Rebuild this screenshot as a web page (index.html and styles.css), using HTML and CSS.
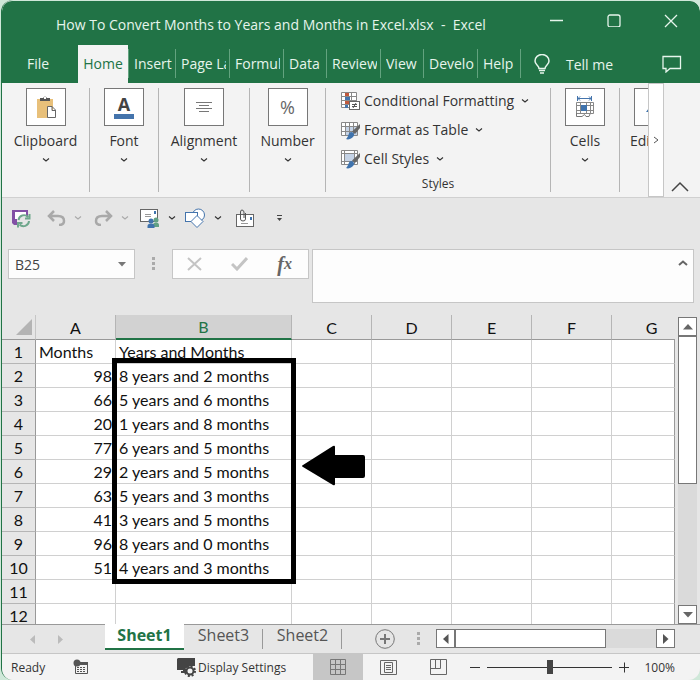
FILE: index.html
```html
<!DOCTYPE html>
<html lang="en">
<head>
  <meta charset="UTF-8" />
  <meta name="viewport" content="width=device-width, initial-scale=1.0"/>
  <title>How To Convert Months to Years and Months in Excel.xlsx - Excel</title>
  <link rel="stylesheet" href="styles.css">
</head>
<body>
  <svg width="0" height="0" class="defs" aria-hidden="true">
    <symbol id="chevron" viewBox="0 0 8 6"><path d="M1 1.500L4 4L7 1.500" fill="none" stroke="currentColor" stroke-width="1.1"/></symbol>
    <symbol id="brush" viewBox="0 0 14 16"><path d="M14 0V4L9 10L6 7.500Z" fill="#666"/><path d="M5 8C8 8 9 11 7 13C5 15 2 16 0 15C3 12 2 9 5 8Z" fill="#3f73ad"/></symbol>
  </svg>

  <div class="window">
    <header class="titlebar">
      <h1>How To Convert Months to Years and Months in Excel.xlsx &nbsp;-&nbsp; Excel</h1>
      <div class="window-buttons">
        <button aria-label="Minimize"><svg width="14" height="14"><path d="M0 7.500H13"/></svg></button>
        <button aria-label="Maximize"><svg width="14" height="14"><rect x="1" y="2" width="12" height="12" rx="2"/></svg></button>
        <button aria-label="Close"><svg width="14" height="15"><path d="M1 2L13 14M13 2L1 14"/></svg></button>
      </div>
    </header>

    <nav class="tabs">
      <a href="#" class="file">File</a>
      <a href="#" class="active">Home</a>
      <a href="#" class="w47"><span>Insert</span></a>
      <a href="#" class="w54"><span>Page Layout</span></a>
      <a href="#" class="w54"><span>Formulas</span></a>
      <a href="#" class="w43"><span>Data</span></a>
      <a href="#" class="w54"><span>Review</span></a>
      <a href="#" class="w43"><span>View</span></a>
      <a href="#" class="w54"><span>Developer</span></a>
      <a href="#" class="w43"><span>Help</span></a>
      <a href="#" class="tell">
        <svg width="16" height="21" viewBox="0 0 16 21"><path d="M5 14.500C5 11.500 1 11 1 7A7 6.500 0 0 1 15 7C15 11 11 11.500 11 14.500ZM5 16.500H11M6 19H10" fill="none" stroke="#e6f5ec" stroke-width="1.5"/></svg>
        Tell me
      </a>
      <button class="comment" aria-label="Comments"><svg width="20" height="18"><path d="M1 1.500H18.500V13.500H8L4 17V13.500H1Z" fill="none" stroke="#e6f5ec" stroke-width="1.3"/></svg></button>
    </nav>

    <section class="ribbon">
      <div class="group g-clipboard">
        <button class="big">
          <span class="tile"><svg width="24" height="24" viewBox="0 0 24 24">
            <path d="M3 4H19V23H3Z" fill="#e8c07a"/><path d="M6 6V3H9Q11 0 13 3H16V6Z" fill="#555"/><rect x="10" y="2" width="2" height="2" fill="#fff"/>
            <path d="M13.500 11.500H18L21.500 15V22.500H13.500ZM18 11.500V15.500H21.500" fill="#fff" stroke="#666"/></svg></span>
          Clipboard
          <svg class="chev"><use href="#chevron"/></svg>
        </button>
      </div>
      <div class="group g-font">
        <button class="big">
          <span class="tile letter"><b>A</b></span>
          Font
          <svg class="chev"><use href="#chevron"/></svg>
        </button>
      </div>
      <div class="group g-align">
        <button class="big">
          <span class="tile"><svg width="18" height="12"><path d="M1 1.500H17M4 4.500H14M1 7.500H17M4 10.500H14" stroke="#777"/></svg></span>
          Alignment
          <svg class="chev"><use href="#chevron"/></svg>
        </button>
      </div>
      <div class="group g-number">
        <button class="big">
          <span class="tile percent">%</span>
          Number
          <svg class="chev"><use href="#chevron"/></svg>
        </button>
      </div>
      <div class="group g-styles">
        <button class="row">
          <svg width="20" height="20"><path d="M1.500 1.500H16.500V16.500H1.500ZM1.500 5.500H16.500M1.500 9.500H16.500M1.500 13.500H16.500M5.500 1.500V16.500M11.500 1.500V16.500" fill="#fff" stroke="#888"/><path d="M5 2H9V5H5ZM5 10H9V13H5Z" fill="#c0583c"/><path d="M5 6H10V9H5ZM5 14H8V17H5Z" fill="#4474ac"/><rect x="9.500" y="10.500" width="10" height="8" fill="#fff" stroke="#666"/><path d="M12 13.500H17M12 15.500H17M16 12L13 17" stroke="#555"/></svg>
          Conditional Formatting
          <svg class="chev"><use href="#chevron"/></svg>
        </button>
        <button class="row">
          <svg width="20" height="20"><path d="M1.500 2.500H17.500V15.500H1.500Z" fill="#fff"/><path d="M6 7H17V15H6Z" fill="#c5d3e6"/><path d="M1.500 2.500H17.500V15.500H1.500ZM1.500 6.500H17.500M1.500 11.500H17.500M5.500 2.500V15.500M9.500 2.500V15.500M13.500 2.500V15.500" fill="none" stroke="#888"/><use href="#brush" x="6" y="4" width="14" height="16"/></svg>
          Format as Table
          <svg class="chev"><use href="#chevron"/></svg>
        </button>
        <button class="row">
          <svg width="20" height="20"><path d="M1.500 1.500H17.500V15.500H1.500Z" fill="#fff"/><path d="M5 5H14V12H5Z" fill="#c5d3e6"/><path d="M1.500 1.500H17.500V15.500H1.500ZM1.500 4.500H17.500M1.500 12.500H17.500M4.500 1.500V15.500M14.500 1.500V15.500" fill="none" stroke="#888"/><use href="#brush" x="6" y="4" width="14" height="16"/></svg>
          Cell Styles
          <svg class="chev"><use href="#chevron"/></svg>
        </button>
        <div class="caption">Styles</div>
      </div>
      <div class="group g-cells">
        <button class="big">
          <span class="tile"><svg width="20" height="22"><path d="M2.500 0V5M16.500 0V5M3 2.500H16M5 .5L3 2.500L5 4.500M14 .5L16 2.500L14 4.500" fill="none" stroke="#4474ac"/><path d="M1.500 6.500H18.500V17.500H1.500ZM1.500 9.500H18.500M1.500 14.500H18.500M5.500 6.500V17.500M11.500 6.500V17.500M15.500 6.500V17.500" fill="none" stroke="#888"/><rect x="6" y="9" width="6" height="6" fill="#3f73ad"/><path d="M1.500 17V20.500H7L9.500 18.500L11 20.500H14L15 18" fill="none" stroke="#777"/></svg></span>
          Cells
          <svg class="chev"><use href="#chevron"/></svg>
        </button>
      </div>
      <div class="group g-editing">
        <button class="big">
          <span class="tile"><svg width="16" height="16"><path d="M0 13L6 5V13Z" fill="#3f73ad"/></svg></span>
          Editing
        </button>
      </div>
      <button class="scroll-right" aria-label="More"><svg width="6" height="8"><path d="M1 1L5 4L1 7" fill="none" stroke="#555"/></svg></button>
      <button class="collapse" aria-label="Collapse the ribbon"><svg width="18" height="11"><path d="M1 10L9 2L17 10" fill="none" stroke="#444" stroke-width="1.5"/></svg></button>
    </section>

    <div class="quick">
      <button class="q-save" aria-label="Save"><svg width="20" height="19"><path d="M1 1H17V7H15V3H4V10H6V16H3L1 14Z" fill="#8250a5"/><path d="M4 3H15V8H8V10H4Z" fill="#fff"/><path d="M7.500 11A5.500 5.500 0 0 1 17 8M18 12A5.500 5.500 0 0 1 8.500 15.500M18.500 5V9.500H14M7 18.500V14H11.500" fill="none" stroke="#6fa78c" stroke-width="2"/></svg></button>
      <button class="q-undo faded" aria-label="Undo"><svg width="19" height="16"><path d="M2 6H11Q17 6 17 11Q17 15 12 15M7 1L2 6L7 11" fill="none" stroke="#a9a9a9" stroke-width="2.5"/></svg><svg class="chev"><use href="#chevron"/></svg></button>
      <button class="q-redo faded" aria-label="Redo"><svg width="19" height="16"><path d="M17 6H8Q2 6 2 11Q2 15 7 15M12 1L17 6L12 11" fill="none" stroke="#a9a9a9" stroke-width="2.5"/></svg><svg class="chev"><use href="#chevron"/></svg></button>
      <button class="q-mail" aria-label="Send for review"><svg width="20" height="20"><rect x=".5" y="1.500" width="17" height="12" fill="#fff" stroke="#666"/><path d="M5 6.500H11M5 8.500H11" stroke="#999"/><rect x="14" y="3" width="2" height="3" fill="#3f73ad"/><circle cx="16" cy="12" r="2.500" fill="#62a184"/><path d="M13 19V17Q13 14.500 16 14.500T19 17V19Z" fill="#62a184"/><circle cx="11" cy="13" r="2.500" fill="#3f73ad"/><path d="M7.500 20V18Q7.500 15.500 11 15.500T14.500 18V20Z" fill="#3f73ad"/></svg><svg class="chev"><use href="#chevron"/></svg></button>
      <button class="q-shapes" aria-label="Shapes"><svg width="21" height="20"><circle cx="13.500" cy="7" r="6" fill="#fff" stroke="#4474ac"/><rect x=".5" y="4.500" width="12" height="9" fill="#fff" stroke="#4474ac"/><path d="M12 7.500L18 13.500L12 19.500L6 13.500Z" fill="#fff" stroke="#4474ac"/></svg><svg class="chev"><use href="#chevron"/></svg></button>
      <button class="q-attach" aria-label="Attach"><svg width="19" height="19"><rect x=".5" y="5.500" width="17" height="12" fill="#fff" stroke="#666"/><rect x="14" y="8" width="2" height="3" fill="#3f73ad"/><path d="M5 14.500H12" stroke="#999"/><path d="M9.500 4V10Q9.500 12 7 12T4.500 10V3Q4.500 1 6 1T8 3V9" fill="none" stroke="#555"/></svg></button>
      <button class="q-more" aria-label="Customize toolbar"><svg width="5" height="8"><path d="M0 1.500H5" stroke="#444"/><path d="M0 4H5L2.500 7Z" fill="#444"/></svg></button>
    </div>

    <div class="formula">
      <div class="namebox">
        <input type="text" value="B25" aria-label="Name box">
        <button aria-label="Open name list"><svg width="8" height="5"><path d="M0 0H8L4 4.500Z" fill="#777"/></svg></button>
      </div>
      <div class="dots"><i></i><i></i><i></i></div>
      <div class="fx">
        <button aria-label="Cancel"><svg width="15" height="14"><path d="M1 1L14 13M14 1L1 13" stroke="#c4c4c4" stroke-width="2"/></svg></button>
        <button aria-label="Enter"><svg width="17" height="14"><path d="M1 7L6 12L16 1" fill="none" stroke="#c4c4c4" stroke-width="3"/></svg></button>
        <button class="fx-label" aria-label="Insert function">f<small>x</small></button>
      </div>
      <div class="bar">
        <input type="text" aria-label="Formula">
        <button aria-label="Collapse formula bar"><svg width="10" height="6"><path d="M1 5L5 1.500L9 5" fill="none" stroke="#666" stroke-width="2"/></svg></button>
      </div>
    </div>

    <main class="sheet">
      <div class="grid">
        <table>
          <colgroup><col class="c-num"><col class="c-a"><col class="c-b"><col class="c-n"><col class="c-n"><col class="c-n"><col class="c-n"><col></colgroup>
          <thead>
            <tr><th class="corner"><svg width="16" height="16"><path d="M16 0V16H0Z" fill="#b4b4b4"/></svg></th><th>A</th><th class="selected">B</th><th>C</th><th>D</th><th>E</th><th>F</th><th class="last">G</th></tr>
          </thead>
          <tbody>
            <tr><th>1</th><td class="text">Months</td><td>Years and Months</td><td></td><td></td><td></td><td></td><td></td></tr>
            <tr><th>2</th><td>98</td><td>8 years and 2 months<div class="frame"></div></td><td></td><td></td><td></td><td></td><td></td></tr>
            <tr><th>3</th><td>66</td><td>5 years and 6 months</td><td></td><td></td><td></td><td></td><td></td></tr>
            <tr><th>4</th><td>20</td><td>1 years and 8 months</td><td></td><td></td><td></td><td></td><td></td></tr>
            <tr><th>5</th><td>77</td><td>6 years and 5 months</td><td></td><td></td><td></td><td></td><td></td></tr>
            <tr><th>6</th><td>29</td><td>2 years and 5 months</td><td><svg class="arrow" width="64" height="42"><path d="M1 20L31 1Q33 0 33 2V10H61Q63 10 63 12V31Q63 33 61 33H33V39Q33 41 31 40L1 22Q-1 21 1 20Z"/></svg></td><td></td><td></td><td></td><td></td></tr>
            <tr><th>7</th><td>63</td><td>5 years and 3 months</td><td></td><td></td><td></td><td></td><td></td></tr>
            <tr><th>8</th><td>41</td><td>3 years and 5 months</td><td></td><td></td><td></td><td></td><td></td></tr>
            <tr><th>9</th><td>96</td><td>8 years and 0 months</td><td></td><td></td><td></td><td></td><td></td></tr>
            <tr><th>10</th><td>51</td><td>4 years and 3 months</td><td></td><td></td><td></td><td></td><td></td></tr>
            <tr><th>11</th><td></td><td></td><td></td><td></td><td></td><td></td><td></td></tr>
            <tr><th>12</th><td></td><td></td><td></td><td></td><td></td><td></td><td></td></tr>
          </tbody>
        </table>
      </div>
      <div class="vscroll">
        <button aria-label="Scroll up"><svg width="10" height="6"><path d="M0 5.500H10L5 0Z" fill="#666"/></svg></button>
        <div class="thumb"></div>
        <button class="end" aria-label="Scroll down"><svg width="10" height="6"><path d="M0 0H10L5 5.500Z" fill="#666"/></svg></button>
      </div>
    </main>

    <div class="sheets">
      <div class="sheet-nav">
        <button aria-label="Previous sheet"><svg width="5" height="9"><path d="M5 0V9L0 4.500Z" fill="#bbb"/></svg></button>
        <button aria-label="Next sheet"><svg width="5" height="9"><path d="M0 0V9L5 4.500Z" fill="#bbb"/></svg></button>
      </div>
      <a href="#" class="current">Sheet1</a>
      <a href="#">Sheet3</a>
      <a href="#">Sheet2</a>
      <button class="add" aria-label="New sheet"><svg width="20" height="20"><circle cx="10" cy="10" r="9.300" fill="none" stroke="#777"/><path d="M5 10H15M10 5V15" stroke="#777" stroke-width="2"/></svg></button>
      <div class="dots"><i></i><i></i><i></i></div>
      <div class="hscroll">
        <button aria-label="Scroll left"><svg width="6" height="10"><path d="M5.500 0V10L0 5Z" fill="#555"/></svg></button>
        <div class="thumb"></div>
        <button class="end" aria-label="Scroll right"><svg width="6" height="10"><path d="M0 0V10L5.500 5Z" fill="#555"/></svg></button>
      </div>
    </div>

    <footer class="status">
      <span class="ready">Ready</span>
      <button class="macro" aria-label="Record macro"><svg width="16" height="16"><path d="M2.500 3.500H14.500V14.500H2.500Z" fill="none" stroke="#555"/><path d="M7 3H15V6H7Z" fill="#555"/><circle cx="4" cy="4" r="3.500" fill="#555"/><path d="M4 8.500H13M4 10.500H13M4 12.500H13" stroke="#555" stroke-dasharray="2 1"/></svg></button>
      <button class="display"><svg width="20" height="19"><path d="M1 0H18V8H13L8 11V12H9V15H4V13H6V12H0V1Z" fill="#444"/><circle cx="13" cy="13" r="3.500" fill="none" stroke="#444" stroke-width="2"/><circle cx="13" cy="13" r="5" fill="none" stroke="#444" stroke-width="2" stroke-dasharray="2 1.930"/></svg>Display Settings</button>
      <button class="view on" aria-label="Normal view"><svg width="17" height="16"><path d="M.5 .5H15.500V15.500H.5ZM.5 5.500H15.500M.5 10.500H15.500M5.500 .5V15.500M10.500 .5V15.500" fill="none" stroke="#777"/></svg></button>
      <button class="view" aria-label="Page layout view"><svg width="17" height="15"><path d="M.5 .5H16.500V14.500H.5ZM4.500 2.500H12.500V12.500H4.500ZM6 5.500H11M6 7.500H11M6 9.500H11" fill="none" stroke="#666"/></svg></button>
      <button class="view" aria-label="Page break view"><svg width="17" height="16"><path d="M.5 .5H16.500V15.500H.5ZM.5 9.500H10.500V.5M5.500 .5V9.500" fill="none" stroke="#666"/></svg></button>
      <button class="zoom-step" aria-label="Zoom out"><svg width="11" height="11"><path d="M0 5.500H10" stroke="#333"/></svg></button>
      <input type="range" min="10" max="190" value="100" aria-label="Zoom">
      <button class="zoom-step" aria-label="Zoom in"><svg width="11" height="11"><path d="M0 5.500H10M5.500 .5V10.500" stroke="#333"/></svg></button>
      <span class="percent">100%</span>
    </footer>
  </div>
</body>
</html>
```
FILE: styles.css
```css
:root {
  --green: #217346;
  --ribbon: #f3f3f3;
  --gray: #e6e6e6;
  --line: #c6c6c6;
  --text: #333;
}
* {
  box-sizing: border-box;
}
body {
  margin: 0;
  background-color: #cfe8d9;
  color: var(--text);
  font-family: "Open Sans", sans-serif;
  font-size: 14px;
}
button {
  display: flex;
  align-items: center;
  justify-content: center;
  padding: 0;
  border: none;
  background: none;
  color: inherit;
  font: inherit;
}
a {
  color: inherit;
  text-decoration: none;
}
svg {
  flex: none;
}
.defs {
  position: absolute;
}
.chev {
  width: 8px;
  height: 6px;
}
.window {
  display: flex;
  flex-direction: column;
  height: 100vh;
  padding-top: 1px;
  margin-left: 1px;
  border-left: 1px solid var(--green);
  border-radius: 12px;
  overflow: hidden;
  background: linear-gradient(#cfe8d9 1px, var(--gray) 1px);
}

/* title bar */
.titlebar {
  display: flex;
  height: 44px;
  background-color: var(--green);
  color: #e6f5ec;
  border-radius: 10px 10px 0 0;
}
.titlebar h1 {
  flex: 1;
  margin: 0;
  padding-left: 54px;
  font-size: 14px;
  font-weight: 400;
  line-height: 48px;
  white-space: nowrap;
}
.window-buttons {
  display: flex;
  align-items: flex-start;
  gap: 43px;
  padding: 12px 22px 0 0;
}
.window-buttons svg {
  fill: none;
  stroke: #e6f5ec;
  stroke-width: 1.3;
}

/* ribbon tabs */
.tabs {
  display: flex;
  align-items: stretch;
  height: 38px;
  background-color: var(--green);
  color: #e6f5ec;
  line-height: 37px;
  white-space: nowrap;
}
.tabs a {
  flex: none;
}
.tabs span {
  display: block;
  overflow: hidden;
  height: 29px;
  margin: 4px 3px 4px 0;
  line-height: 29px;
}
.w43, .w47, .w54, .tell {
  padding-left: 6px;
  background: linear-gradient(#63a37f, #63a37f) left 4px / 1px 29px no-repeat;
}
.w43 { width: 43px; }
.w47 { width: 47px; }
.w54 { width: 54px; }
.file {
  width: 76px;
  padding-left: 25px;
}
.tabs .active {
  width: 50px;
  background-color: var(--ribbon);
  color: var(--green);
  text-align: center;
}
.tell {
  display: flex;
  align-items: center;
  gap: 16px;
  padding-left: 14px;
}
.comment {
  margin-left: auto;
  padding-right: 18px;
}

/* ribbon */
.ribbon {
  display: flex;
  height: 115px;
  background-color: var(--ribbon);
  border-bottom: 1px solid #d0d0d0;
}
.group {
  flex: none;
  margin: 5px 0;
  border-right: 1px solid #b5b5b5;
}
.big {
  flex-direction: column;
  width: 100%;
  line-height: 30px;
}
.big .chev {
  margin-top: 1px;
}
.tile {
  display: flex;
  align-items: center;
  justify-content: center;
  width: 40px;
  height: 38px;
  border: 1px solid #777;
  background-color: #fff;
}
.letter b {
  width: 20px;
  border-bottom: 5px solid #4474ac;
  color: #444;
  font-size: 18px;
  line-height: 19px;
}
.tile.percent {
  color: #666;
  font-size: 18px;
}
.g-clipboard { width: 88px; }
.g-font { width: 69px; }
.g-align { width: 91px; }
.g-number { width: 76px; }
.g-styles {
  display: flex;
  flex-direction: column;
  align-items: flex-start;
  width: 225px;
  padding-left: 14px;
}
.g-cells { width: 69px; }
.g-editing {
  width: 28px;
  overflow: hidden;
  border: none;
}
.g-editing .big {
  align-items: flex-start;
  padding-left: 10px;
}
.g-editing .tile {
  margin-left: 4px;
}
.row {
  gap: 4px;
  height: 29px;
  padding-bottom: 4px;
  white-space: nowrap;
}
.row .chev {
  margin-left: 3px;
}
.caption {
  width: 100%;
  margin-top: auto;
  padding-right: 14px;
  font-size: 12px;
  line-height: 16px;
  text-align: center;
}
.scroll-right {
  width: 16px;
  border: 1px solid var(--line);
  background-color: #fff;
}
.collapse {
  align-items: flex-end;
  margin-left: 7px;
  padding-bottom: 5px;
}

/* quick access toolbar */
.quick {
  display: flex;
  align-items: center;
  height: 40px;
  padding-left: 9px;
}
.quick button {
  flex: none;
  justify-content: flex-start;
  gap: 8px;
}
.faded {
  color: #aaa;
}
.q-save { width: 36px; }
.q-undo { width: 47px; }
.q-redo { width: 46px; }
.q-mail { width: 45px; }
.q-shapes { width: 51px; }
.q-attach { width: 41px; }

/* formula bar */
.formula {
  display: flex;
  align-items: flex-start;
  height: 70px;
  padding: 11px 6px 0;
}
.namebox, .fx, .bar {
  display: flex;
  align-items: center;
  height: 30px;
  border: 1px solid var(--line);
  background-color: #fdfdfd;
}
.namebox {
  width: 127px;
  padding-right: 8px;
}
.formula input {
  flex: 1;
  min-width: 0;
  padding: 0 6px;
  border: none;
  background: none;
  color: #444;
  font: inherit;
}
.dots {
  display: flex;
  flex-direction: column;
  gap: 2px;
}
.dots i {
  width: 3px;
  height: 3px;
  background-color: #aaa;
}
.formula .dots {
  margin: 8px 17px;
}
.fx {
  justify-content: space-between;
  width: 137px;
  padding: 0 16px 0 14px;
}
.fx-label {
  color: #666;
  font: italic 700 20px/24px "Liberation Serif", serif;
}
.fx-label small {
  font-size: 16px;
}
.bar {
  flex: 1;
  align-items: flex-start;
  height: 54px;
  margin-left: 3px;
  padding: 10px 5px 0 0;
}

/* worksheet */
.sheet {
  display: flex;
  flex: 1;
  min-height: 0;
  gap: 3px;
  padding-right: 3px;
}
.grid {
  flex: 1;
  overflow: hidden;
  padding-top: 7px;
}
table {
  width: 100%;
  border-collapse: separate;
  border-spacing: 0;
  table-layout: fixed;
  color: #111;
  font: 16px/23px Lato, sans-serif;
  background-color: #fff;
}
.c-num { width: 34px; }
.c-a { width: 80px; }
.c-b { width: 176px; }
.c-n { width: 80px; }
th, td {
  position: relative;
  height: 24px;
  padding: 0;
  border-right: 1px solid #d0d0d0;
  border-bottom: 1px solid #d0d0d0;
  font-weight: 400;
  white-space: nowrap;
}
td {
  padding-left: 3px;
}
td:nth-child(2) {
  padding-right: 3px;
  text-align: right;
}
td.text {
  text-align: left;
}
td:last-child {
  border-right-color: #999;
}
th {
  background-color: var(--gray);
  border-right-color: #999;
  border-bottom-color: #b5b5b5;
}
thead th {
  border-right-color: #b5b5b5;
  border-bottom-color: #999;
}
thead .corner {
  padding-right: 3px;
  text-align: right;
  line-height: 0;
  border-right-color: #c6c6c6;
}
thead .selected {
  background-color: #d2d2d2;
  border-bottom: 2px solid var(--green);
  color: var(--green);
}
thead .last {
  padding-left: 16px;
  border-right: none;
}
.frame {
  position: absolute;
  z-index: 1;
  top: -6px;
  left: -4px;
  width: 184px;
  height: 226px;
  border: 5px solid #000;
}
.arrow {
  position: absolute;
  z-index: 1;
  top: -15px;
  left: 10px;
}
.vscroll {
  display: flex;
  flex-direction: column;
  width: 19px;
  margin-top: 9px;
  background-color: #dadada;
}
.vscroll button, .hscroll button {
  flex: none;
  width: 19px;
  height: 19px;
  border: 1px solid #777;
  background-color: #fff;
}
.thumb {
  border: 1px solid #777;
  background-color: #fff;
}
.vscroll .thumb {
  height: 148px;
}
.vscroll .end {
  margin-top: auto;
}

/* sheet tabs */
.sheets {
  display: flex;
  height: 29px;
  border-top: 1px solid #999;
  color: #555;
  font-size: 16px;
  line-height: 21px;
}
.sheet-nav {
  display: flex;
  gap: 23px;
  width: 103px;
  padding-left: 28px;
}
.sheets a {
  width: 79px;
  height: 24px;
  text-align: center;
  background: linear-gradient(#999, #999) right 4px / 1px 20px no-repeat;
}
.sheets .current {
  height: 26px;
  margin-top: -1px;
  border-bottom: 2px solid var(--green);
  background: #fff;
  color: var(--green);
  font-weight: 700;
  line-height: 23px;
}
.add {
  margin-left: 33px;
}
.sheets .dots {
  margin: 7px 16px 0 22px;
}
.hscroll {
  display: flex;
  flex: 1;
  height: 19px;
  margin: 4px 25px 0 0;
  background-color: #dadada;
}
.hscroll .thumb {
  width: 151px;
}
.hscroll .end {
  margin-left: auto;
}

/* status bar */
.status {
  display: flex;
  align-items: center;
  height: 27px;
  border-top: 1px solid var(--line);
  background-color: var(--ribbon);
  font-size: 12px;
}
.ready {
  width: 62px;
  padding-left: 9px;
}
.macro {
  width: 34px;
}
.display {
  gap: 1px;
  margin-left: 79px;
}
.view {
  width: 50px;
  height: 100%;
}
.on {
  margin-left: auto;
  background-color: #c6c6c6;
}
.zoom-step {
  width: 24px;
}
.status input {
  width: 125px;
  height: 14px;
  margin: 0;
  appearance: none;
  background: linear-gradient(#333, #333) center / 100% 1px no-repeat;
}
.status input::-webkit-slider-thumb {
  appearance: none;
  width: 6px;
  height: 14px;
  background-color: #444;
}
.status .percent {
  padding: 0 25px 0 8px;
}
```
